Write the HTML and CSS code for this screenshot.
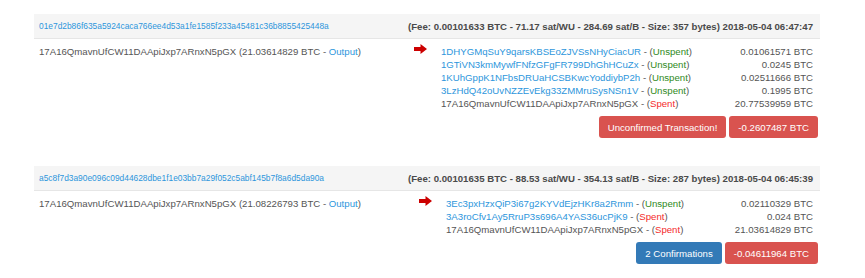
FILE: index.html
```html
<!DOCTYPE html>
<html lang="en">
<head>
  <meta charset="UTF-8" />
  <title>Transactions</title>
  <link rel="stylesheet" href="styles.css">
</head>
<body>
  <div class="txs">

    <div class="tx">
      <div class="tx-head">
        <a class="hash" href="#">01e7d2b86f635a5924caca766ee4d53a1fe1585f233a45481c36b8855425448a</a>
        <span class="fee">(Fee: 0.00101633 BTC - 71.17 sat/WU - 284.69 sat/B - Size: 357 bytes) 2018-05-04 06:47:47</span>
      </div>
      <div class="tx-body">
        <div class="inputs">17A16QmavnUfCW11DAApiJxp7ARnxN5pGX (21.03614829 BTC - <a href="#">Output</a>)</div>
        <div class="arrow">
          <svg width="13" height="10" viewBox="0 0 13 10"><path d="M0 3h6.5V0L13 5l-6.5 5V7H0z" fill="#c00"/></svg>
        </div>
        <div class="outputs">
          <div class="out"><span><a href="#">1DHYGMqSuY9qarsKBSEoZJVSsNHyCiacUR</a> - (<span class="unspent">Unspent</span>)</span><span>0.01061571 BTC</span></div>
          <div class="out"><span><a href="#">1GTiVN3kmMywfFNfzGFgFR799DhGhHCuZx</a> - (<span class="unspent">Unspent</span>)</span><span>0.0245 BTC</span></div>
          <div class="out"><span><a href="#">1KUhGppK1NFbsDRUaHCSBKwcYoddiybP2h</a> - (<span class="unspent">Unspent</span>)</span><span>0.02511666 BTC</span></div>
          <div class="out"><span><a href="#">3LzHdQ42oUvNZZEvEkg33ZMMruSysNSn1V</a> - (<span class="unspent">Unspent</span>)</span><span>0.1995 BTC</span></div>
          <div class="out"><span>17A16QmavnUfCW11DAApiJxp7ARnxN5pGX - (<span class="spent">Spent</span>)</span><span>20.77539959 BTC</span></div>
        </div>
      </div>
      <div class="tx-foot">
        <button class="btn btn-red">Unconfirmed Transaction!</button>
        <button class="btn btn-red">-0.2607487 BTC</button>
      </div>
    </div>

    <div class="tx">
      <div class="tx-head">
        <a class="hash" href="#">a5c8f7d3a90e096c09d44628dbe1f1e03bb7a29f052c5abf145b7f8a6d5da90a</a>
        <span class="fee">(Fee: 0.00101635 BTC - 88.53 sat/WU - 354.13 sat/B - Size: 287 bytes) 2018-05-04 06:45:39</span>
      </div>
      <div class="tx-body">
        <div class="inputs">17A16QmavnUfCW11DAApiJxp7ARnxN5pGX (21.08226793 BTC - <a href="#">Output</a>)</div>
        <div class="arrow">
          <svg width="13" height="10" viewBox="0 0 13 10"><path d="M0 3h6.5V0L13 5l-6.5 5V7H0z" fill="#c00"/></svg>
        </div>
        <div class="outputs narrow">
          <div class="out"><span><a href="#">3Ec3pxHzxQiP3i67g2KYVdEjzHKr8a2Rmm</a> - (<span class="unspent">Unspent</span>)</span><span>0.02110329 BTC</span></div>
          <div class="out"><span><a href="#">3A3roCfv1Ay5RruP3s696A4YAS36ucPjK9</a> - (<span class="spent">Spent</span>)</span><span>0.024 BTC</span></div>
          <div class="out"><span>17A16QmavnUfCW11DAApiJxp7ARnxN5pGX - (<span class="spent">Spent</span>)</span><span>21.03614829 BTC</span></div>
        </div>
      </div>
      <div class="tx-foot">
        <button class="btn btn-blue">2 Confirmations</button>
        <button class="btn btn-red">-0.04611964 BTC</button>
      </div>
    </div>

  </div>
</body>
</html>
```
FILE: styles.css
```css
body {
  margin: 0;
  padding: 14px 45px 0 34px;
  font-family: "Liberation Sans", Arial, sans-serif;
  font-size: 9.65px;
  color: #555;
  background: #fff;
}

a {
  color: #2d96dc;
  text-decoration: none;
}

.tx + .tx {
  margin-top: 28px;
}

.tx-head {
  display: flex;
  justify-content: space-between;
  align-items: center;
  box-sizing: border-box;
  height: 25px;
  padding: 0 7px 0 5px;
  background: #f5f5f5;
  border-bottom: 1px solid #e6e6e6;
}

.hash {
  font-size: 8.4px;
}

.fee {
  font-weight: bold;
  color: #4a4a4a;
}

.tx-body {
  display: flex;
  padding: 6px 7px 0 5px;
  line-height: 13px;
}

.inputs {
  flex: 1;
}

.arrow {
  width: 27px;
  margin-top: -1px;
}

.outputs {
  width: 372px;
}

.outputs.narrow {
  width: 367px;
}

.out {
  display: flex;
  justify-content: space-between;
}

.unspent {
  color: #2f8a22;
}

.spent {
  color: #f42a2a;
}

.tx-foot {
  display: flex;
  justify-content: flex-end;
  gap: 3px;
  padding: 6px 2px 0 0;
}

.btn {
  font-family: "Liberation Sans", Arial, sans-serif;
  font-size: 9.65px;
  color: #fff;
  border: none;
  border-radius: 3px;
  height: 22px;
  padding: 0 9px;
}

.btn-red {
  background: #d9534f;
}

.btn-blue {
  background: #337ab7;
}
```
